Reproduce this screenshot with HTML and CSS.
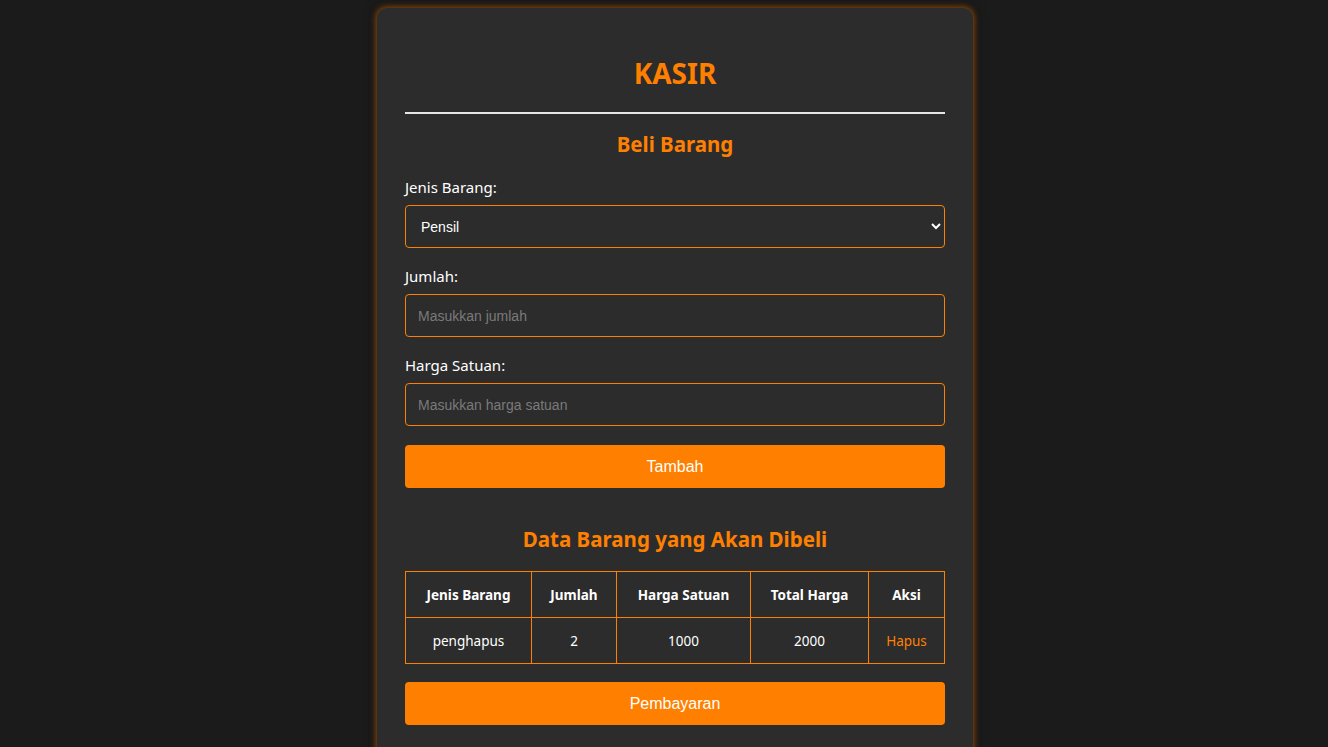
FILE: index.html
```html
<!DOCTYPE html>
<html lang="id">
<head>
<meta charset="utf-8">
<title>Kasir</title>
<link rel="stylesheet" href="styles.css">
</head>
<body>
<div class="card">
  <h1 class="title">KASIR</h1>
  <hr class="divider">
  <h2 class="subtitle">Beli Barang</h2>
  <div class="group">
    <label class="label" for="jenis">Jenis Barang:</label>
    <select class="field select" id="jenis">
      <option>Pensil</option>
      <option>Pulpen</option>
      <option>Penghapus</option>
    </select>
  </div>
  <div class="group">
    <label class="label" for="jumlah">Jumlah:</label>
    <input class="field" id="jumlah" type="number" placeholder="Masukkan jumlah">
  </div>
  <div class="group">
    <label class="label" for="harga">Harga Satuan:</label>
    <input class="field" id="harga" type="number" placeholder="Masukkan harga satuan">
  </div>
  <button class="btn btn-add">Tambah</button>

  <h2 class="subtitle subtitle-data">Data Barang yang Akan Dibeli</h2>
  <table class="table">
    <thead>
      <tr>
        <th class="c1">Jenis Barang</th>
        <th class="c2">Jumlah</th>
        <th class="c3">Harga Satuan</th>
        <th class="c4">Total Harga</th>
        <th class="c5">Aksi</th>
      </tr>
    </thead>
    <tbody>
      <tr>
        <td>penghapus</td>
        <td>2</td>
        <td>1000</td>
        <td>2000</td>
        <td><a class="del" href="#">Hapus</a></td>
      </tr>
    </tbody>
  </table>
  <button class="btn btn-pay">Pembayaran</button>
</div>
</body>
</html>
```
FILE: styles.css
```css
* { box-sizing: border-box; }
html, body { height: 100%; }
body {
  margin: 0;
  padding: 8px 0 0 22px;
  background: #1b1b1b;
  font-family: "Noto Sans", "Open Sans", sans-serif;
  color: #ffffff;
  overflow: hidden;
}
.card {
  width: 596px;
  margin: 0 auto;
  background: #2c2c2c;
  border-radius: 10px;
  padding: 26px 28px 40px;
  box-shadow: 0 0 6px 1px rgba(255, 128, 0, 0.55), 0 0 14px rgba(0, 0, 0, 0.6);
  min-height: 800px;
}
.title {
  margin: 20px 0 0;
  font-size: 28px;
  line-height: 38px;
  font-weight: 700;
  color: #ff8000;
  text-align: center;
}
.divider {
  margin: 20px 0 0;
  border: 0;
  height: 2px;
  background: #e6e6e6;
}
.subtitle {
  margin: 15px 0 0;
  font-size: 20.5px;
  line-height: 30px;
  font-weight: 700;
  color: #ff8000;
  text-align: center;
}
.group {
  margin-top: 18px;
  display: flex;
  flex-direction: column;
}
.group + .group { margin-top: 18px; }
.label {
  font-size: 15px;
  line-height: 21px;
  margin-bottom: 7px;
  color: #ffffff;
}
.field {
  width: 100%;
  height: 43px;
  border: 1px solid #ff8000;
  border-radius: 4px;
  background: #2c2c2c;
  color: #ffffff;
  font-family: "Liberation Sans", Arial, sans-serif;
  font-size: 14px;
  padding: 0 12px;
  outline: none;
}
.field::placeholder { color: #7a7a7a; }
.select { padding-left: 11px; }
.btn {
  display: block;
  width: 100%;
  height: 43px;
  border: 0;
  border-radius: 4px;
  background: #ff8000;
  color: #ffffff;
  font-family: "Liberation Sans", Arial, sans-serif;
  font-size: 16px;
  cursor: pointer;
}
.btn-add { margin-top: 19px; }
.subtitle-data { margin-top: 36px; }
.table {
  margin-top: 17px;
  width: 100%;
  border-collapse: collapse;
  font-size: 13.5px;
}
.table th, .table td {
  border: 1px solid #ff8000;
  height: 46px;
  text-align: center;
  padding: 0 8px;
}
.table th { font-weight: 700; }
.c1 { width: 126px; }
.c2 { width: 85px; }
.c3 { width: 134px; }
.c4 { width: 118px; }
.del { color: #ff8000; text-decoration: none; }
.btn-pay { margin-top: 18px; }
```
